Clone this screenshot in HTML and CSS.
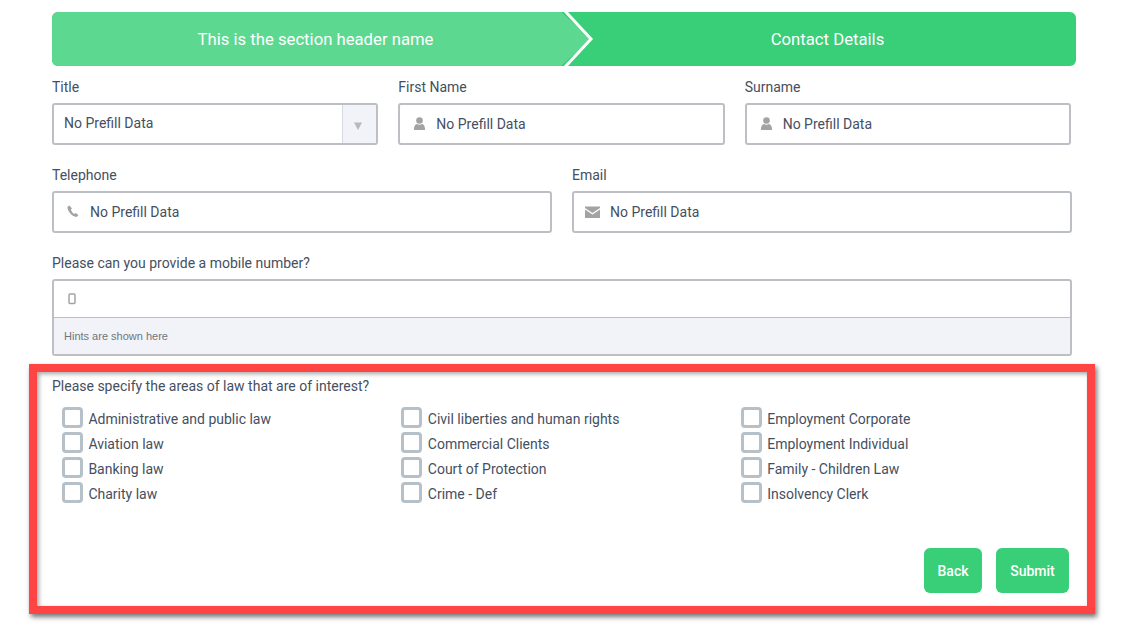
FILE: index.html
```html
<!DOCTYPE html>
<html lang="en">
<head>
<meta charset="utf-8">
<title>Contact Details</title>
<link rel="stylesheet" href="styles.css">
</head>
<body>
<main class="page">
  <div class="steps">
    <div class="step step-done">This is the section header name</div>
    <div class="step step-current">Contact Details</div>
    <svg class="chevron" width="32" height="54" viewBox="0 0 32 54" aria-hidden="true"><polyline points="0,-1 26,27 0,55" fill="none" stroke="#fff" stroke-width="3"/></svg>
  </div>
  <div class="row row-three">
    <div class="field">
      <label class="label">Title</label>
      <div class="box box-select">
        <span class="value value-select">No Prefill Data</span>
        <span class="addon"><svg width="8" height="8" viewBox="0 0 8 8"><path d="M0 0.500H8L4 8Z" fill="#b4bac2"/></svg></span>
      </div>
    </div>
    <div class="field">
      <label class="label">First Name</label>
      <div class="box">
        <svg class="icon" width="14" height="14" viewBox="0 0 14 14"><circle cx="7.500" cy="3.500" r="3.300" fill="#a3a3a3"/><path d="M2 13C1.500 9.500 3.500 7.300 5 7C6.500 8 8.500 8 10 7C11.500 7.300 13.500 9.500 13 13Z" fill="#a3a3a3"/></svg>
        <span class="value">No Prefill Data</span>
      </div>
    </div>
    <div class="field">
      <label class="label">Surname</label>
      <div class="box">
        <svg class="icon" width="14" height="14" viewBox="0 0 14 14"><circle cx="7.500" cy="3.500" r="3.300" fill="#a3a3a3"/><path d="M2 13C1.500 9.500 3.500 7.300 5 7C6.500 8 8.500 8 10 7C11.500 7.300 13.500 9.500 13 13Z" fill="#a3a3a3"/></svg>
        <span class="value">No Prefill Data</span>
      </div>
    </div>
  </div>
  <div class="row row-two">
    <div class="field">
      <label class="label">Telephone</label>
      <div class="box">
        <svg class="icon" width="14" height="14" viewBox="0 0 14 14"><path d="M3.500 0.500L1.500 1.700C1 5.500 5.500 11.300 10.500 12L12.500 10.300L9.800 8L8.300 9C6.800 8.300 5.300 6.300 4.800 4.500L6 3.500Z" fill="#a3a3a3"/></svg>
        <span class="value">No Prefill Data</span>
      </div>
    </div>
    <div class="field">
      <label class="label">Email</label>
      <div class="box box-mail">
        <svg class="icon" width="15" height="14" viewBox="0 0 15 14"><path d="M0 1.500H15V3L7.500 8L0 3Z" fill="#a3a3a3"/><path d="M0 4.500L7.500 9.500L15 4.500V13H0Z" fill="#a3a3a3"/></svg>
        <span class="value">No Prefill Data</span>
      </div>
    </div>
  </div>
  <div class="row">
    <div class="field">
      <label class="label">Please can you provide a mobile number?</label>
      <div class="box box-stack">
        <div class="input-line">
          <svg class="icon" width="14" height="12" viewBox="0 0 14 12"><rect x="5" y="1" width="6" height="9.500" rx="1" fill="none" stroke="#a3a3a3" stroke-width="1.500"/></svg>
        </div>
        <div class="hint">Hints are shown here</div>
      </div>
    </div>
  </div>
  <section class="law">
    <p class="label law-title">Please specify the areas of law that are of interest?</p>
    <div class="checks">
      <label class="check"><span class="tick"></span>Administrative and public law</label>
      <label class="check"><span class="tick"></span>Civil liberties and human rights</label>
      <label class="check"><span class="tick"></span>Employment Corporate</label>
      <label class="check"><span class="tick"></span>Aviation law</label>
      <label class="check"><span class="tick"></span>Commercial Clients</label>
      <label class="check"><span class="tick"></span>Employment Individual</label>
      <label class="check"><span class="tick"></span>Banking law</label>
      <label class="check"><span class="tick"></span>Court of Protection</label>
      <label class="check"><span class="tick"></span>Family - Children Law</label>
      <label class="check"><span class="tick"></span>Charity law</label>
      <label class="check"><span class="tick"></span>Crime - Def</label>
      <label class="check"><span class="tick"></span>Insolvency Clerk</label>
    </div>
    <div class="actions">
      <button class="btn btn-back" type="button">Back</button>
      <button class="btn btn-submit" type="button">Submit</button>
    </div>
  </section>
</main>
</body>
</html>
```
FILE: styles.css
```css
* { box-sizing: border-box; }
html, body { margin: 0; height: 100%; background: #fff; overflow: hidden; }
body { font-family: Roboto, "Liberation Sans", sans-serif; font-size: 14px; color: #454f5f; }
.page { width: 1124px; padding: 12px 0 0 52px; }

.steps { position: relative; display: flex; width: 1024px; height: 54px; background: #39ce78; border-radius: 6px; overflow: hidden; color: #fff; font-size: 16.700px; }
.step { display: flex; align-items: center; justify-content: center; }
.step-done { width: 539px; padding-right: 12px; background: #5dd890; clip-path: polygon(0 0, 509px 0, 100% 50%, 509px 100%, 0 100%); }
.step-current { flex: 1; padding-right: 8px; margin-left: -4px; }
.chevron { position: absolute; left: 513px; top: 0; overflow: visible; }

.row { display: grid; grid-template-columns: 1fr; width: 1020px; margin-top: 20px; }
.steps + .row { margin-top: 11px; }
.row-three { grid-template-columns: repeat(3, 1fr); column-gap: 20px; width: 1019px; }
.row-two { grid-template-columns: repeat(2, 1fr); column-gap: 20px; }

.label { display: block; height: 20px; margin: 0 0 6px; line-height: 20px; font-size: 14px; color: #454f5f; }
.box { display: flex; align-items: center; height: 42px; padding-left: 12px; background: #fff; border: 2px solid #bcc0c5; border-radius: 3px; }
.box-select { padding-left: 10px; }
.box-mail { padding-left: 11px; }
.box-stack { display: block; height: 77px; padding: 0; }
.icon { flex: none; margin-right: 10px; }
.value { font-size: 14px; color: #454f5f; }
.value-select { flex: 1; margin-bottom: 2px; }
.addon { display: flex; align-items: center; justify-content: center; width: 34px; height: 100%; background: #f1f3f8; border-left: 1px solid #d5d9e2; padding: 3px 3px 0 0; }
.input-line { display: flex; align-items: center; height: 37px; padding-left: 10px; border-bottom: 1px solid #bcc0c5; }
.hint { display: flex; align-items: center; height: 36px; padding-left: 10px; background: #f1f3f8; font-family: "Liberation Sans", Arial, sans-serif; font-size: 11px; color: #70757d; }

.law { display: flex; flex-direction: column; width: 1066px; height: 250px; margin: 8px 0 0 -23px; padding: 4px 18px 13px 15px; border: 8px solid #ff4444; box-shadow: 2px 3px 5px rgba(0, 0, 0, 0.55), inset 2px 2px 4px rgba(0, 0, 0, 0.35); }
.law-title { margin: 0 0 11px; }
.checks { display: grid; grid-template-columns: repeat(3, 339.400px); grid-auto-rows: 25px; padding-left: 10px; }
.check { display: flex; align-items: flex-start; color: #454f5f; line-height: 24px; font-size: 14px; }
.tick { flex: none; width: 21px; height: 21px; margin-right: 5.400px; background: #fff; border: 3px solid #b5c0c8; border-radius: 4px; }
.actions { display: flex; justify-content: flex-end; gap: 14px; margin-top: auto; }
.btn { height: 45px; border: 0; border-radius: 6px; background: #39ce78; color: #fff; font-family: Roboto, sans-serif; font-size: 14px; font-weight: 500; }
.btn-back { width: 58px; }
.btn-submit { width: 73px; }
```
